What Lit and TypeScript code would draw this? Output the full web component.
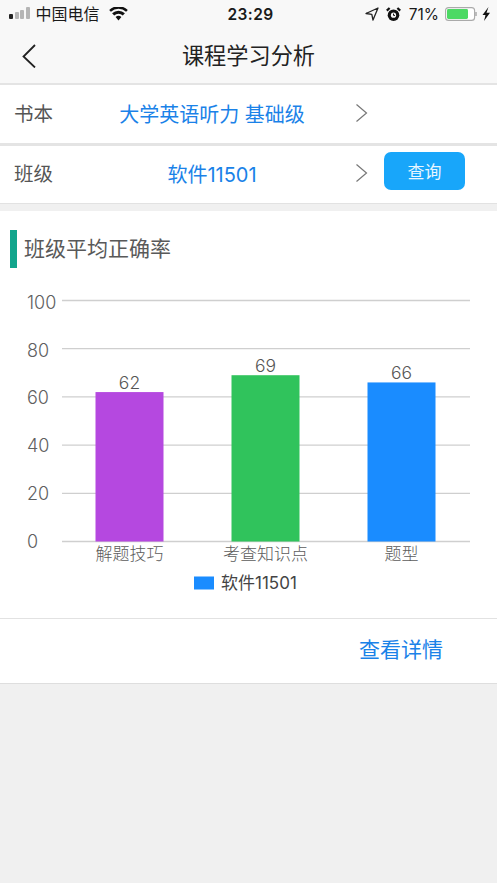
import { LitElement, html, css, svg } from "lit";
import { customElement } from "lit/decorators.js";

const FONT = css`"Inter", "Noto Sans CJK SC", sans-serif`;
const GRID = [100, 80, 60, 40, 20, 0];
const BARS = [
  { name: "解题技巧", value: 62, color: "#b548e0", x: 95.5 },
  { name: "考查知识点", value: 69, color: "#30c35c", x: 231.5 },
  { name: "题型", value: 66, color: "#1a8cff", x: 367.5 },
];
const Y0 = 541.5 - 290;
const yOf = (v: number) => Y0 - v * 2.41;

@customElement("app-root")
export class AppRoot extends LitElement {
  static styles = css`
    :host { display: block; width: 497px; height: 883px; background: #f0f0f0; overflow: hidden; font-family: "Noto Sans CJK SC", sans-serif; }
    .top { background: #f8f8f8; border-bottom: 2px solid #e4e4e4; height: 85px; box-sizing: border-box; }
    .status { height: 28px; display: flex; align-items: center; padding: 0 6px 0 9px; font-size: 16px; color: #1a1a1a; }
    .signal { display: flex; align-items: center; gap: 1.5px; margin-right: 6px; }
    .signal i { width: 4px; height: 10px; border-radius: 1px; background: #b5b5b5; display: block; }
    .signal i:first-child { background: #222; height: 5px; margin-top: 5px; width: 4px; }
    .signal i:nth-child(2) { height: 7px; margin-top: 3px; }
    .signal i:nth-child(3) { height: 9px; margin-top: 1px; }
    .signal i:nth-child(4) { height: 12px; margin-top: -2px; }
    .carrier { margin-top: -2px; }
    .wifi { margin-left: 9px; }
    .time { font: 600 15.5px ${FONT}; letter-spacing: .4px; margin-left: 100px; }
    .right { margin-left: auto; display: flex; align-items: center; }
    .alarm { margin-left: 7px; }
    .pct { font: 400 15.5px ${FONT}; margin: 0 6px 0 8px; }
    .nav { height: 55px; display: grid; grid-template-columns: 1fr auto 1fr; align-items: center; padding: 0 20px; }
    .nav svg { margin-left: 1px; }
    .title { font-size: 22.2px; color: #222; line-height: 1; margin-top: -3px; }
    .row { background: #fff; display: grid; grid-template-columns: 99px 198px auto 1fr; align-items: center; padding-left: 14px; }
    .row1 { height: 56px; padding-bottom: 2px; border-bottom: 3px solid #e4e4e4; }
    .row2 { height: 53px; padding-bottom: 4px; border-bottom: 1px solid #e2e2e2; }
    .label { font-size: 19.5px; color: #555; line-height: 1; }
    .value { font: 400 20px/1 ${FONT}; color: #1a82e8; text-align: center; white-space: nowrap; }
    .row1 .value { margin-top: 4px; }
    .row2 .value { margin-top: 5px; }
    .row svg { display: block; }
    .chev { margin-left: 44px; }
    .btn { margin-left: 16px; margin-top: -3px; width: 81px; height: 36px; padding-bottom: 2px; background: #18a6fa; color: #e8f6ff; border-radius: 7px; display: flex; align-items: center; justify-content: center; font-size: 17px; }
    .card { margin-top: 7px; background: #fff; height: 407px; border-bottom: 1px solid #e2e2e2; }
    .heading { display: flex; align-items: center; height: 38px; padding: 19px 0 0 10px; gap: 7px; }
    .heading b { width: 7px; height: 38px; background: #12a58c; }
    .heading span { font-size: 21px; color: #595959; line-height: 1; margin-bottom: 4px; }
    .chart { display: block; margin-top: 22px; font-family: ${FONT}; }
    .axis { font-size: 18px; font-weight: 300; fill: #606060; }
    .cat { font-size: 17px; fill: #5c5c5c; font-family: "Noto Sans CJK SC", sans-serif; font-weight: 300; }
    .val { font-size: 17.5px; font-weight: 300; fill: #555; }
    .leg { font-size: 17px; fill: #444; }
    .more { background: #fff; height: 58px; padding: 0 54px 6px 0; border-bottom: 1px solid #dedede; display: flex; align-items: center; justify-content: flex-end; font-size: 21px; color: #1a82e8; }
  `;

  private chevron() {
    return html`<svg class="chev" width="13" height="20" viewBox="0 0 13 20"><path d="M1.5 1.5 L11.5 10 L1.5 18.5" fill="none" stroke="#777" stroke-width="1.2"/></svg>`;
  }

  render() {
    return html`
      <div class="top">
        <div class="status">
          <div class="signal"><i></i><i></i><i></i><i></i></div>
          <span class="carrier">中国电信</span>
          <svg class="wifi" width="19" height="14" viewBox="0 0 19 14"><path d="M9.5 13.5 L6.6 10.1 A4.4 4.4 0 0 1 12.4 10.1 Z M5.2 8.5 L3.1 6.2 A9.3 9.3 0 0 1 15.9 6.2 L13.8 8.5 A6.4 6.4 0 0 0 5.2 8.5 Z M1.9 4.8 L0.2 2.9 A13.6 13.6 0 0 1 18.8 2.9 L17.1 4.8 A11 11 0 0 0 1.9 4.8 Z" fill="#111"/></svg>
          <span class="time">23:29</span>
          <div class="right">
            <svg width="14" height="14" viewBox="0 0 14 14"><path d="M13 1 L1 6.5 L6.8 7.4 L8 13 Z" fill="none" stroke="#222" stroke-width="1.3" stroke-linejoin="round"/></svg>
            <svg class="alarm" width="15" height="15" viewBox="0 0 15 15"><circle cx="7.5" cy="8.2" r="5.8" fill="#111"/><circle cx="7.5" cy="8.2" r="2.6" fill="#f8f8f8"/><path d="M7.5 6.6V8.4H9" stroke="#111" stroke-width="1" fill="none"/><path d="M.8 3.6 L3.6 1 M14.2 3.6 L11.4 1" stroke="#111" stroke-width="2.2"/></svg>
            <span class="pct">71%</span>
            <svg width="46" height="16" viewBox="0 0 46 16"><rect x=".6" y="1.6" width="29" height="12.8" rx="3" fill="#fff" stroke="#aaa" stroke-width="1.1"/><rect x="2" y="3" width="21" height="10" rx="1.4" fill="#4cd964"/><path d="M31 6v4" stroke="#aaa" stroke-width="1.5"/><path d="M43.5 1 L37.5 9 H40.5 L39 15 L45 6.8 H41.5 Z" fill="#111"/></svg>
          </div>
        </div>
        <div class="nav">
          <svg width="16" height="24" viewBox="0 0 16 24"><path d="M14 1 L2.5 12.5 L14 23.5" fill="none" stroke="#222" stroke-width="1.8"/></svg>
          <span class="title">课程学习分析</span>
          <span></span>
        </div>
      </div>
      <div class="row row1">
        <span class="label">书本</span>
        <span class="value">大学英语听力 基础级</span>
        ${this.chevron()}
      </div>
      <div class="row row2">
        <span class="label">班级</span>
        <span class="value">软件11501</span>
        ${this.chevron()}
        <div class="btn">查询</div>
      </div>
      <section class="card">
        <div class="heading"><b></b><span>班级平均正确率</span></div>
        <svg class="chart" width="497" height="325" viewBox="0 0 497 325">
          ${GRID.map((g, i) => svg`
            <line x1="62" x2="470" y1=${yOf(g)} y2=${yOf(g)} stroke="#cfcfcf" stroke-width="1.3"></line>
            <text class="axis" x="27" y=${19 + i * 47.7}>${g}</text>
          `)}
          ${BARS.map((b) => svg`
            <rect x=${b.x} y=${yOf(b.value)} width="68" height=${Y0 - yOf(b.value)} fill=${b.color}></rect>
            <text class="val" x=${b.x + 34} y=${yOf(b.value) - 3.5} text-anchor="middle">${b.value}</text>
            <text class="cat" x=${b.x + 34} y="270" text-anchor="middle">${b.name}</text>
          `)}
          <rect x="194" y="286.5" width="20" height="13" fill="#1a8cff"></rect>
          <text class="leg" x="221" y="299">软件11501</text>
        </svg>
      </section>
      <div class="more">查看详情</div>
    `;
  }
}
